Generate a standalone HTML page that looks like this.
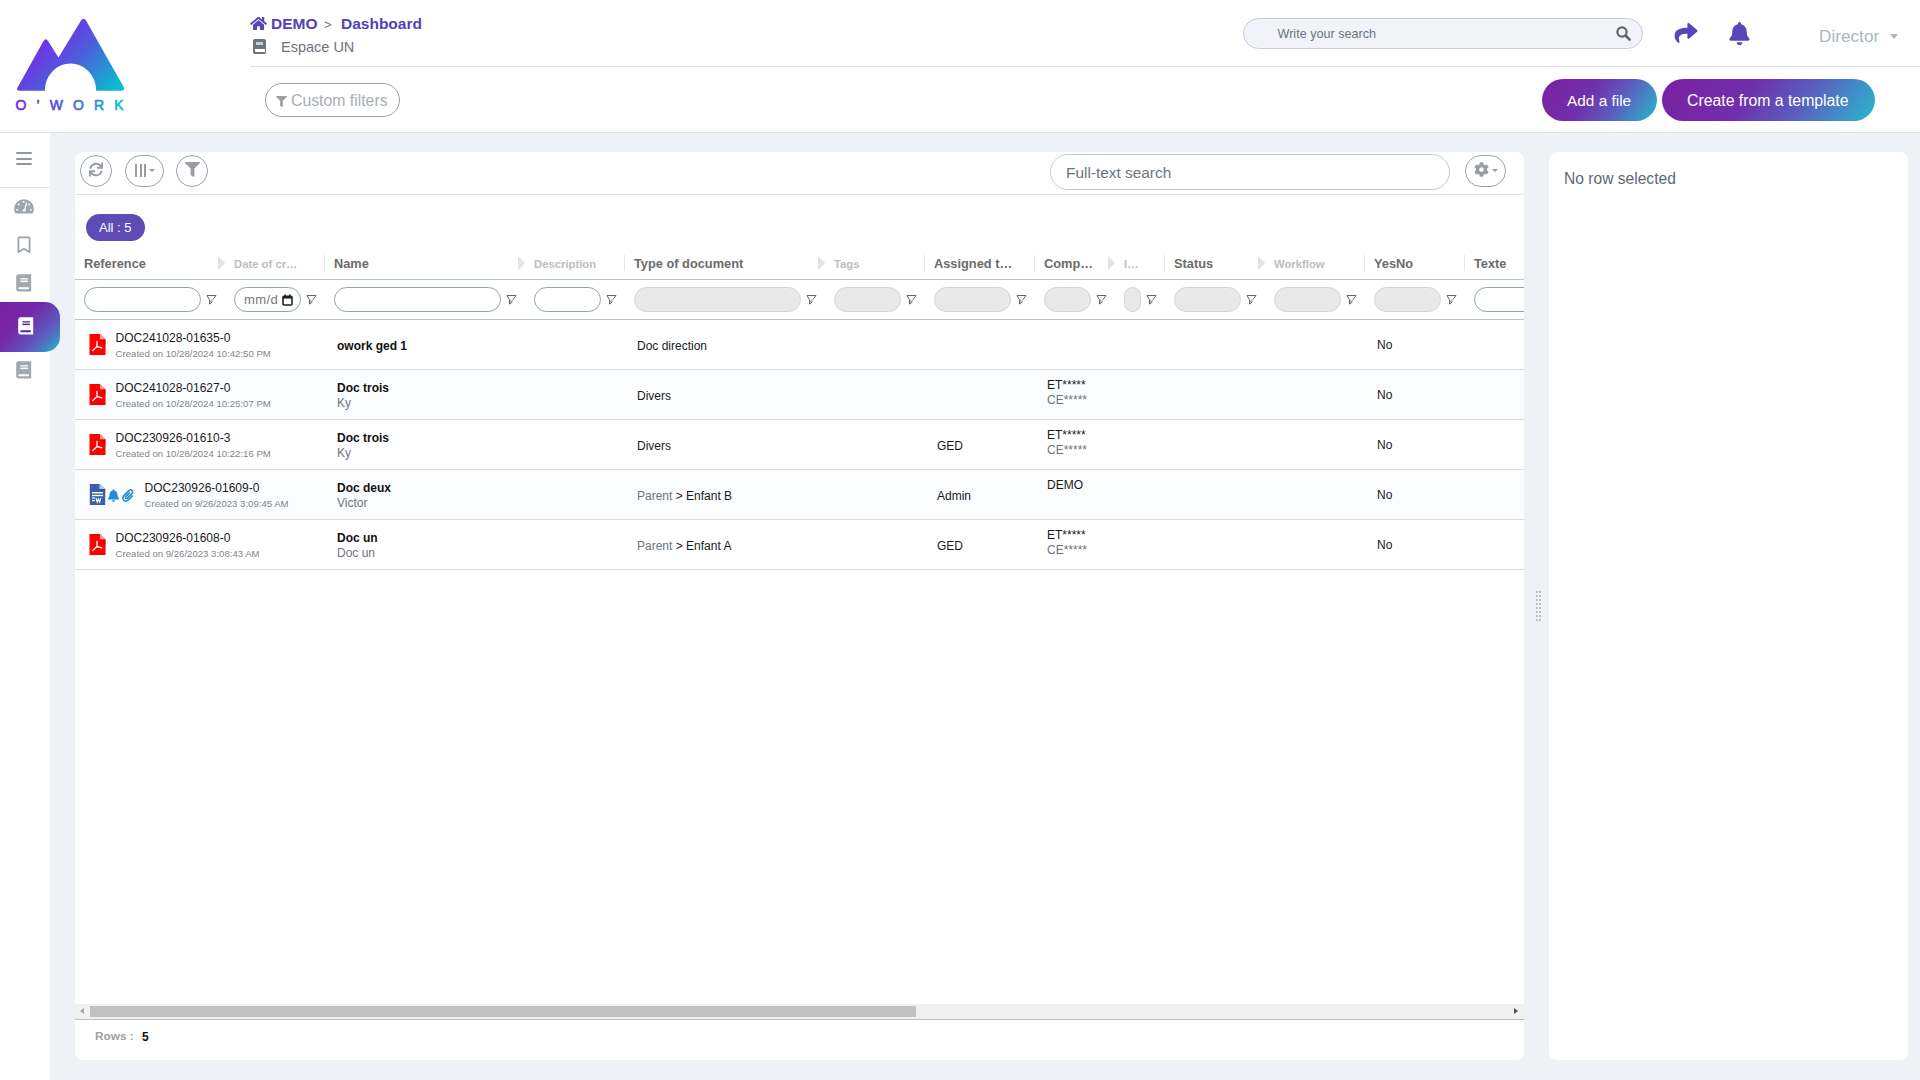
<!DOCTYPE html>
<html><head><meta charset="utf-8">
<style>
*{box-sizing:border-box;margin:0;padding:0}
html,body{width:1920px;height:1080px;overflow:hidden;background:#eef2f7;font-family:"Liberation Sans",sans-serif;}
.abs{position:absolute}
#header{position:absolute;left:0;top:0;width:1920px;height:133px;background:#fff;border-bottom:1px solid #dde2e8}
#sidebar{position:absolute;left:0;top:133px;width:50px;height:947px;background:#fff}
.panel{position:absolute;background:#fff;border-radius:8px}
.txt{position:absolute;white-space:nowrap;line-height:1}

.hd{position:absolute;top:258px;font-size:12.8px;font-weight:bold;color:#6b6b6b;white-space:nowrap;line-height:1}
.hl{position:absolute;top:259px;font-size:11.3px;font-weight:bold;color:#bdbdbd;white-space:nowrap;line-height:1}
.tri{position:absolute;top:256px;width:0;height:0;border-top:7px solid transparent;border-bottom:7px solid transparent;border-left:7px solid #e3e3e3}
.vsep{position:absolute;top:255px;width:1px;height:16px;background:#e6e6e6}
.fin{position:absolute;top:287px;height:25px;border:1px solid #8fa5a5;border-radius:13px;background:#fff}
.fin.dis{background:#e9e9e9;border-color:#cfd6d6}
.fun{position:absolute;top:294px}
.mmd{position:absolute;left:9px;top:5px;font-size:13px;color:#777;line-height:1;letter-spacing:0.4px}
.cal{position:absolute;left:47px;top:6px}
.row{position:absolute;left:75px;width:1449px;height:50px;border-bottom:1px solid #d9dde0}
.ref{position:absolute;font-size:12px;color:#1a1a1a;white-space:nowrap;line-height:1}
.cre{position:absolute;font-size:9.6px;color:#7f868d;white-space:nowrap;line-height:1}
.nm{position:absolute;font-size:12px;font-weight:bold;color:#111;white-space:nowrap;line-height:1}
.sub{position:absolute;font-size:12px;color:#6c757d;white-space:nowrap;line-height:1}
.cell{position:absolute;font-size:12px;color:#1a1a1a;white-space:nowrap;line-height:1}
.sideico{position:absolute}
</style></head>
<body>

<div id="header">
  <!-- logo -->
  <svg class="abs" style="left:0;top:0" width="140" height="120" viewBox="0 0 140 120">
    <defs>
      <linearGradient id="lg" x1="35" y1="35" x2="106" y2="106" gradientUnits="userSpaceOnUse">
        <stop offset="0" stop-color="#7a25ea"/>
        <stop offset="0.45" stop-color="#4f5bdc"/>
        <stop offset="1" stop-color="#00c8cc"/>
      </linearGradient>
      <linearGradient id="lgt" x1="0" y1="0" x2="1" y2="0">
        <stop offset="0" stop-color="#7a2ae0"/>
        <stop offset="0.45" stop-color="#4a5ad8"/>
        <stop offset="1" stop-color="#0ac4cc"/>
      </linearGradient>
    </defs>
    <path fill="url(#lg)" d="M17.3 88 L43.5 41 Q45.8 37.5 48 41 L58.5 57.5 L81 20.5 Q83.5 17 86 20.5 L123.7 87 Q125.2 90.7 121 90.7 L96.2 90.7 A25.7 27.2 0 0 0 44.8 90.7 L20 90.7 Q15.8 90.7 17.3 88 Z"/>
    <text x="15.5" y="109.8" fill="url(#lgt)" stroke="url(#lgt)" font-family="Liberation Sans" font-weight="normal" stroke-width="0.6" font-size="14" textLength="108" lengthAdjust="spacing">O’WORK</text>
  </svg>
  <!-- breadcrumb -->
  <svg class="abs" style="left:250px;top:17px" width="17" height="13" viewBox="0 0 576 448"><path fill="#5a44b9" d="M280.4 148.3L96 300.1V464a16 16 0 0 0 16 16l112.1-.3a16 16 0 0 0 15.9-16V368a16 16 0 0 1 16-16h64a16 16 0 0 1 16 16v95.6a16 16 0 0 0 16 16.1L464 480a16 16 0 0 0 16-16V300L295.7 148.3a12.2 12.2 0 0 0-15.3 0zM571.6 251.5L488 182.6V44.1a12 12 0 0 0-12-12h-56a12 12 0 0 0-12 12v72.6L318.5 43a48 48 0 0 0-61 0L4.3 251.5a12 12 0 0 0-1.6 16.9l25.5 31A12 12 0 0 0 45.2 301l235.2-193.7a12.2 12.2 0 0 1 15.3 0L530.9 301a12 12 0 0 0 16.9-1.6l25.5-31a12 12 0 0 0-1.7-16.9z" transform="translate(0,-32)"/></svg>
  <div class="txt" style="left:271px;top:16px;font-size:15.5px;font-weight:bold;color:#5440b8">DEMO</div>
  <div class="txt" style="left:324px;top:18px;font-size:13px;color:#6c757d">&gt;</div>
  <div class="txt" style="left:341px;top:16px;font-size:15.5px;font-weight:bold;color:#5440b8">Dashboard</div>
  <div class="abs" style="left:253px;top:39px;width:13px;height:15px;background:#6c757d;border-radius:2px"></div>
  <div class="abs" style="left:256px;top:42px;width:7px;height:3px;background:#c8ccd0"></div>
  <div class="abs" style="left:255px;top:49px;width:10px;height:3px;background:#fff;border-radius:0 0 0 1px"></div>
  <div class="txt" style="left:281px;top:40px;font-size:14.5px;color:#6c757d">Espace UN</div>
  <div class="abs" style="left:250px;top:66px;width:1670px;height:1px;background:#dde2e8"></div>
  <!-- custom filters -->
  <div class="abs" style="left:265px;top:83px;width:135px;height:34px;border:1px solid #9aa0a6;border-radius:17px"></div>
  <svg class="abs" style="left:276px;top:96px" width="11" height="11" viewBox="0 0 512 512"><path fill="#9aa0a6" d="M487.976 0H24.028C2.71 0-8.047 25.866 7.058 40.971L192 225.941V432c0 7.831 3.821 15.17 10.237 19.662l80 55.98C298.02 518.69 320 507.493 320 487.98V225.941l184.947-184.97C520.021 25.896 509.338 0 487.976 0z"/></svg>
  <div class="txt" style="left:291px;top:93px;font-size:15.8px;color:#a9aeb3">Custom filters</div>
  <!-- search -->
  <div class="abs" style="left:1243px;top:18px;width:400px;height:31px;border:1px solid #c9cdd3;border-radius:16px;background:#f1f2fa"></div>
  <div class="txt" style="left:1277.5px;top:28px;font-size:12.6px;color:#6c757d">Write your search</div>
  <svg class="abs" style="left:1616px;top:26px" width="15" height="15" viewBox="0 0 15 15"><circle cx="6" cy="6" r="4.6" fill="none" stroke="#5f666d" stroke-width="2.2"/><path d="M9.5 9.5 L13.5 13.5" stroke="#5f666d" stroke-width="2.6" stroke-linecap="round"/></svg>
  <!-- share -->
  <svg class="abs" style="left:1674px;top:23px" width="24" height="20" viewBox="0 0 512 448"><path fill="#5a44b9" d="M503.7 157.5l-176-152C312.3-7.8 288 3.1 288 24v80.1C127.4 105.9 0 138.1 0 290.4c0 61.5 39.6 122.4 83.4 154.2 13.7 9.9 33.1-2.5 28.1-18.6C66.1 280.8 132.3 242.1 288 239.9V328c0 20.9 24.3 31.9 39.7 18.5l176-152c11.1-9.6 11.1-26.8 0-37z" transform="translate(0,0)"/></svg>
  <!-- bell -->
  <svg class="abs" style="left:1729px;top:22px" width="21" height="23" viewBox="0 0 448 512"><path fill="#5a44b9" d="M224 512c35.32 0 63.97-28.65 63.97-64H160.03c0 35.35 28.65 64 63.97 64zm215.39-149.71c-19.32-20.76-55.47-51.99-55.47-154.29 0-77.7-54.48-139.9-127.94-155.16V32c0-17.67-14.32-32-31.98-32s-31.98 14.33-31.98 32v20.84C118.56 68.1 64.08 130.3 64.08 208c0 102.3-36.15 133.53-55.47 154.29-6 6.45-8.66 14.16-8.61 21.71.11 16.4 12.98 32 32.1 32h383.8c19.12 0 32-15.6 32.1-32 .05-7.55-2.61-15.27-8.61-21.71z"/></svg>
  <div class="txt" style="left:1819px;top:28px;font-size:17.2px;color:#adb5bd">Director</div>
  <div class="abs" style="left:1890px;top:34px;width:0;height:0;border-left:4px solid transparent;border-right:4px solid transparent;border-top:5px solid #adb5bd"></div>
  <!-- buttons -->
  <div class="abs" style="left:1542px;top:79px;width:115px;height:42px;border-radius:21px;background:linear-gradient(125deg,#7b1fa2 0%,#7030ab 40%,#5a5ec0 65%,#3a9ac8 88%,#22bccd 100%)"></div>
  <div class="txt" style="left:1567px;top:93px;font-size:15.4px;color:#fff">Add a file</div>
  <div class="abs" style="left:1662px;top:79px;width:213px;height:42px;border-radius:21px;background:linear-gradient(125deg,#7b1fa2 0%,#7030ab 40%,#5a5ec0 65%,#3a9ac8 88%,#22bccd 100%)"></div>
  <div class="txt" style="left:1687px;top:93px;font-size:15.8px;color:#fff">Create from a template</div>
</div>



<div id="sidebar">
</div>
<div class="abs" style="left:16px;top:152px;width:16px;height:2.2px;border-radius:1px;background:#8f969c"></div>
<div class="abs" style="left:16px;top:157.5px;width:16px;height:2.2px;border-radius:1px;background:#8f969c"></div>
<div class="abs" style="left:16px;top:163px;width:16px;height:2.2px;border-radius:1px;background:#8f969c"></div>
<div class="abs" style="left:0;top:187px;width:50px;height:1px;background:#e2e6ea"></div>
<svg class="abs" style="left:14px;top:199px" width="20" height="15" viewBox="0 0 20 15"><path d="M10 0.3 C4.5 0.3 0.2 4.7 0.2 10.1 C0.2 11.9 0.7 13.4 1.5 14.6 H18.5 C19.3 13.4 19.8 11.9 19.8 10.1 C19.8 4.7 15.5 0.3 10 0.3 Z" fill="#9ea5ab"/><rect x="8.7" y="2" width="1.6" height="1.6" fill="#fff"/><rect x="4" y="4.6" width="1.6" height="1.6" fill="#fff"/><rect x="14.4" y="4.6" width="1.6" height="1.6" fill="#fff"/><rect x="2.3" y="10" width="1.6" height="1.6" fill="#fff"/><rect x="16.1" y="10" width="1.6" height="1.6" fill="#fff"/><path d="M12.6 3.5 L10.8 10.5" stroke="#fff" stroke-width="1.3"/><path d="M8.3 12.2 Q8.3 10.2 10.2 10 Q11.8 10 11.9 12.2 Z" fill="#fff"/></svg>
<svg class="abs" style="left:16.5px;top:235.5px" width="14" height="18" viewBox="0 0 14 18"><path d="M1.4 16.2 V2.2 Q1.4 1.3 2.3 1.3 H11.7 Q12.6 1.3 12.6 2.2 V16.2 L7 12.6 Z" fill="none" stroke="#9aa1a7" stroke-width="1.7" stroke-linejoin="round"/></svg>

<svg class="abs" style="left:16px;top:273.5px" width="16" height="18" viewBox="0 0 16 18"><path d="M2.6 0.2 H15.2 V17.4 H2.8 Q0.2 17.4 0.2 14.8 V2.8 Q0.2 0.2 2.6 0.2 Z" fill="#a1a8b0"/><rect x="2.4" y="13.2" width="10.6" height="2.1" rx="0.8" fill="#fff"/><rect x="4.3" y="4.2" width="7.6" height="1.3" fill="#fff"/><rect x="4.3" y="6.6" width="7.6" height="1.5" fill="#fff"/></svg>
<div class="abs" style="left:0;top:302px;width:60px;height:50px;border-radius:0 15px 15px 0;background:linear-gradient(135deg,#7b1fa2 0%,#7428a8 38%,#5a5ec0 72%,#24bacd 100%)"></div>
<svg class="abs" style="left:18px;top:316.5px" width="16" height="18" viewBox="0 0 16 18"><path d="M2.6 0.2 H15.2 V17.4 H2.8 Q0.2 17.4 0.2 14.8 V2.8 Q0.2 0.2 2.6 0.2 Z" fill="#fff"/><rect x="2.4" y="13.2" width="10.6" height="2.1" rx="0.8" fill="#5a25a6"/><rect x="4.3" y="4.2" width="7.6" height="1.3" fill="#5a25a6"/><rect x="4.3" y="6.6" width="7.6" height="1.5" fill="#5a25a6"/></svg>
<svg class="abs" style="left:16px;top:361px" width="16" height="18" viewBox="0 0 16 18"><path d="M2.6 0.2 H15.2 V17.4 H2.8 Q0.2 17.4 0.2 14.8 V2.8 Q0.2 0.2 2.6 0.2 Z" fill="#a1a8b0"/><rect x="2.4" y="13.2" width="10.6" height="2.1" rx="0.8" fill="#fff"/><rect x="4.3" y="4.2" width="7.6" height="1.3" fill="#fff"/><rect x="4.3" y="6.6" width="7.6" height="1.5" fill="#fff"/></svg>
<div class="abs" style="left:75px;top:152px;width:1449px;height:908px;overflow:hidden;border-radius:8px;background:#fff">
</div>
<div class="abs" style="left:0;top:0;width:1524px;height:1080px;overflow:hidden">
<div class="hd" style="left:84px">Reference</div>
<div class="hl" style="left:234px">Date of cr…</div>
<div class="hd" style="left:334px">Name</div>
<div class="hl" style="left:534px">Description</div>
<div class="hd" style="left:634px">Type of document</div>
<div class="hl" style="left:834px">Tags</div>
<div class="hd" style="left:934px">Assigned t…</div>
<div class="hd" style="left:1044px">Comp…</div>
<div class="hl" style="left:1124px">I…</div>
<div class="hd" style="left:1174px">Status</div>
<div class="hl" style="left:1274px">Workflow</div>
<div class="hd" style="left:1374px">YesNo</div>
<div class="hd" style="left:1474px">Texte</div>
<div class="tri" style="left:218px"></div>
<div class="vsep" style="left:324px"></div>
<div class="tri" style="left:518px"></div>
<div class="vsep" style="left:624px"></div>
<div class="tri" style="left:818px"></div>
<div class="vsep" style="left:924px"></div>
<div class="vsep" style="left:1034px"></div>
<div class="tri" style="left:1108px"></div>
<div class="vsep" style="left:1164px"></div>
<div class="tri" style="left:1258px"></div>
<div class="vsep" style="left:1364px"></div>
<div class="vsep" style="left:1464px"></div>
<div class="fin" style="left:84px;width:117px"></div>
<svg class="fun" style="left:206px" width="11" height="12" viewBox="0 0 11 12"><path d="M3.3 5.7 H6.7 V7.6 L3.6 10.5 Z" fill="#c2c2c2"/><path d="M1 1.5 H10 L6.7 5.8 M1 1.5 L3.5 5.8 M3.5 5.8 V10.2 M6.5 7.7 L3.8 10" fill="none" stroke="#666" stroke-width="1" stroke-linejoin="round"/></svg>
<div class="fin" style="left:234px;width:67px"><span class="mmd">mm/d</span><svg class="cal" width="11" height="12" viewBox="0 0 11 12"><rect x="1" y="2.2" width="9" height="8.8" rx="1" fill="none" stroke="#222" stroke-width="1.6"/><rect x="1" y="2" width="9" height="2.6" fill="#222"/><rect x="2.4" y="0.5" width="1.6" height="2.5" fill="#222"/><rect x="7" y="0.5" width="1.6" height="2.5" fill="#222"/></svg></div>
<svg class="fun" style="left:306px" width="11" height="12" viewBox="0 0 11 12"><path d="M3.3 5.7 H6.7 V7.6 L3.6 10.5 Z" fill="#c2c2c2"/><path d="M1 1.5 H10 L6.7 5.8 M1 1.5 L3.5 5.8 M3.5 5.8 V10.2 M6.5 7.7 L3.8 10" fill="none" stroke="#666" stroke-width="1" stroke-linejoin="round"/></svg>
<div class="fin" style="left:334px;width:167px"></div>
<svg class="fun" style="left:506px" width="11" height="12" viewBox="0 0 11 12"><path d="M3.3 5.7 H6.7 V7.6 L3.6 10.5 Z" fill="#c2c2c2"/><path d="M1 1.5 H10 L6.7 5.8 M1 1.5 L3.5 5.8 M3.5 5.8 V10.2 M6.5 7.7 L3.8 10" fill="none" stroke="#666" stroke-width="1" stroke-linejoin="round"/></svg>
<div class="fin" style="left:534px;width:67px"></div>
<svg class="fun" style="left:606px" width="11" height="12" viewBox="0 0 11 12"><path d="M3.3 5.7 H6.7 V7.6 L3.6 10.5 Z" fill="#c2c2c2"/><path d="M1 1.5 H10 L6.7 5.8 M1 1.5 L3.5 5.8 M3.5 5.8 V10.2 M6.5 7.7 L3.8 10" fill="none" stroke="#666" stroke-width="1" stroke-linejoin="round"/></svg>
<div class="fin dis" style="left:634px;width:167px"></div>
<svg class="fun" style="left:806px" width="11" height="12" viewBox="0 0 11 12"><path d="M3.3 5.7 H6.7 V7.6 L3.6 10.5 Z" fill="#c2c2c2"/><path d="M1 1.5 H10 L6.7 5.8 M1 1.5 L3.5 5.8 M3.5 5.8 V10.2 M6.5 7.7 L3.8 10" fill="none" stroke="#666" stroke-width="1" stroke-linejoin="round"/></svg>
<div class="fin dis" style="left:834px;width:67px"></div>
<svg class="fun" style="left:906px" width="11" height="12" viewBox="0 0 11 12"><path d="M3.3 5.7 H6.7 V7.6 L3.6 10.5 Z" fill="#c2c2c2"/><path d="M1 1.5 H10 L6.7 5.8 M1 1.5 L3.5 5.8 M3.5 5.8 V10.2 M6.5 7.7 L3.8 10" fill="none" stroke="#666" stroke-width="1" stroke-linejoin="round"/></svg>
<div class="fin dis" style="left:934px;width:77px"></div>
<svg class="fun" style="left:1016px" width="11" height="12" viewBox="0 0 11 12"><path d="M3.3 5.7 H6.7 V7.6 L3.6 10.5 Z" fill="#c2c2c2"/><path d="M1 1.5 H10 L6.7 5.8 M1 1.5 L3.5 5.8 M3.5 5.8 V10.2 M6.5 7.7 L3.8 10" fill="none" stroke="#666" stroke-width="1" stroke-linejoin="round"/></svg>
<div class="fin dis" style="left:1044px;width:47px"></div>
<svg class="fun" style="left:1096px" width="11" height="12" viewBox="0 0 11 12"><path d="M3.3 5.7 H6.7 V7.6 L3.6 10.5 Z" fill="#c2c2c2"/><path d="M1 1.5 H10 L6.7 5.8 M1 1.5 L3.5 5.8 M3.5 5.8 V10.2 M6.5 7.7 L3.8 10" fill="none" stroke="#666" stroke-width="1" stroke-linejoin="round"/></svg>
<div class="fin dis" style="left:1124px;width:17px"></div>
<svg class="fun" style="left:1146px" width="11" height="12" viewBox="0 0 11 12"><path d="M3.3 5.7 H6.7 V7.6 L3.6 10.5 Z" fill="#c2c2c2"/><path d="M1 1.5 H10 L6.7 5.8 M1 1.5 L3.5 5.8 M3.5 5.8 V10.2 M6.5 7.7 L3.8 10" fill="none" stroke="#666" stroke-width="1" stroke-linejoin="round"/></svg>
<div class="fin dis" style="left:1174px;width:67px"></div>
<svg class="fun" style="left:1246px" width="11" height="12" viewBox="0 0 11 12"><path d="M3.3 5.7 H6.7 V7.6 L3.6 10.5 Z" fill="#c2c2c2"/><path d="M1 1.5 H10 L6.7 5.8 M1 1.5 L3.5 5.8 M3.5 5.8 V10.2 M6.5 7.7 L3.8 10" fill="none" stroke="#666" stroke-width="1" stroke-linejoin="round"/></svg>
<div class="fin dis" style="left:1274px;width:67px"></div>
<svg class="fun" style="left:1346px" width="11" height="12" viewBox="0 0 11 12"><path d="M3.3 5.7 H6.7 V7.6 L3.6 10.5 Z" fill="#c2c2c2"/><path d="M1 1.5 H10 L6.7 5.8 M1 1.5 L3.5 5.8 M3.5 5.8 V10.2 M6.5 7.7 L3.8 10" fill="none" stroke="#666" stroke-width="1" stroke-linejoin="round"/></svg>
<div class="fin dis" style="left:1374px;width:67px"></div>
<svg class="fun" style="left:1446px" width="11" height="12" viewBox="0 0 11 12"><path d="M3.3 5.7 H6.7 V7.6 L3.6 10.5 Z" fill="#c2c2c2"/><path d="M1 1.5 H10 L6.7 5.8 M1 1.5 L3.5 5.8 M3.5 5.8 V10.2 M6.5 7.7 L3.8 10" fill="none" stroke="#666" stroke-width="1" stroke-linejoin="round"/></svg>
<div class="fin" style="left:1474px;width:67px"></div>
<svg class="fun" style="left:1546px" width="11" height="12" viewBox="0 0 11 12"><path d="M3.3 5.7 H6.7 V7.6 L3.6 10.5 Z" fill="#c2c2c2"/><path d="M1 1.5 H10 L6.7 5.8 M1 1.5 L3.5 5.8 M3.5 5.8 V10.2 M6.5 7.7 L3.8 10" fill="none" stroke="#666" stroke-width="1" stroke-linejoin="round"/></svg>
</div>

<div class="abs" style="left:75px;top:194px;width:1449px;height:1px;background:#e6e6e6"></div>
<div class="abs" style="left:80px;top:155px;width:32px;height:32px;border:1px solid #9ea3a8;border-radius:50%"></div>
<svg class="abs" style="left:89px;top:162px" width="14" height="15" viewBox="0 0 512 512"><path fill="#979da3" d="M440.65 12.57l4 82.77A247.16 247.16 0 0 0 255.83 8C134.73 8 33.91 94.92 12.29 209.82A12 12 0 0 0 24.09 224h49.05a12 12 0 0 0 11.67-9.26 175.91 175.91 0 0 1 317-56.94l-101.46-4.86a12 12 0 0 0-12.57 12v47.41a12 12 0 0 0 12 12H500a12 12 0 0 0 12-12V12a12 12 0 0 0-12-12h-47.37a12 12 0 0 0-11.98 12.57zM255.83 432a175.61 175.61 0 0 1-146-77.8l101.8 4.87a12 12 0 0 0 12.57-12v-47.4a12 12 0 0 0-12-12H12a12 12 0 0 0-12 12V500a12 12 0 0 0 12 12h47.35a12 12 0 0 0 12-12.6l-4.15-82.57A247.17 247.17 0 0 0 255.83 504c121.11 0 221.93-86.92 243.55-201.82a12 12 0 0 0-11.8-14.18h-49.05a12 12 0 0 0-11.67 9.26A175.86 175.86 0 0 1 255.83 432z"/></svg>
<div class="abs" style="left:125px;top:155px;width:39px;height:32px;border:1px solid #9ea3a8;border-radius:16px"></div>
<div class="abs" style="left:135px;top:164px;width:2px;height:13px;background:#979da3"></div>
<div class="abs" style="left:139.5px;top:164px;width:2px;height:13px;background:#979da3"></div>
<div class="abs" style="left:144px;top:164px;width:2px;height:13px;background:#979da3"></div>
<div class="abs" style="left:149px;top:169px;width:0;height:0;border-left:3px solid transparent;border-right:3px solid transparent;border-top:3px solid #979da3"></div>
<div class="abs" style="left:176px;top:155px;width:32px;height:32px;border:1px solid #9ea3a8;border-radius:50%"></div>
<svg class="abs" style="left:185px;top:162px" width="15" height="15" viewBox="0 0 512 512"><path fill="#979da3" d="M487.976 0H24.028C2.71 0-8.047 25.866 7.058 40.971L192 225.941V432c0 7.831 3.821 15.17 10.237 19.662l80 55.98C298.02 518.69 320 507.493 320 487.98V225.941l184.947-184.97C520.021 25.896 509.338 0 487.976 0z"/></svg>
<div class="abs" style="left:1050px;top:154px;width:400px;height:36px;border:1px solid #c5ccd3;border-radius:18px;background:#fff"></div>
<div class="txt" style="left:1066px;top:165px;font-size:15.4px;color:#6c757d">Full-text search</div>
<div class="abs" style="left:1465px;top:155px;width:41px;height:32px;border:1px solid #9ea3a8;border-radius:16px"></div>
<svg class="abs" style="left:1473.5px;top:162px" width="15" height="15" viewBox="0 0 512 512"><path fill="#979da3" d="M487.4 315.7l-42.6-24.6c4.3-23.2 4.3-47 0-70.2l42.6-24.6c4.9-2.8 7.1-8.6 5.5-14-11.1-35.6-30-67.8-54.7-94.6-3.8-4.1-10-5.1-14.8-2.3L380.8 110c-17.9-15.4-38.5-27.3-60.8-35.1V25.8c0-5.6-3.9-10.5-9.4-11.7-36.7-8.2-74.3-7.8-109.2 0-5.5 1.2-9.4 6.1-9.4 11.7V75c-22.2 7.9-42.8 19.8-60.8 35.1L88.7 85.5c-4.9-2.8-11-1.9-14.8 2.3-24.7 26.7-43.6 58.9-54.7 94.6-1.7 5.4.6 11.2 5.5 14L67.3 221c-4.3 23.2-4.3 47 0 70.2l-42.6 24.6c-4.9 2.8-7.1 8.6-5.5 14 11.1 35.6 30 67.8 54.7 94.6 3.8 4.1 10 5.1 14.8 2.3l42.6-24.6c17.9 15.4 38.5 27.3 60.8 35.1v49.2c0 5.6 3.9 10.5 9.4 11.7 36.7 8.2 74.3 7.8 109.2 0 5.5-1.2 9.4-6.1 9.4-11.7v-49.2c22.2-7.9 42.8-19.8 60.8-35.1l42.6 24.6c4.9 2.8 11 1.9 14.8-2.3 24.7-26.7 43.6-58.9 54.7-94.6 1.5-5.5-.7-11.3-5.6-14.1zM256 336c-44.1 0-80-35.9-80-80s35.9-80 80-80 80 35.9 80 80-35.9 80-80 80z"/></svg>
<div class="abs" style="left:1492px;top:169px;width:0;height:0;border-left:3px solid transparent;border-right:3px solid transparent;border-top:3px solid #979da3"></div>
<div class="abs" style="left:86px;top:214px;width:59px;height:27px;border-radius:14px;background:#5f4bb6"></div>
<div class="txt" style="left:99px;top:221px;font-size:13px;color:#fff">All : 5</div>

<div class="abs" style="left:0;top:0;width:1524px;height:1080px;overflow:hidden">
<div class="abs" style="left:75px;top:279px;width:1449px;height:1px;background:#b9c4ca"></div>
<div class="abs" style="left:75px;top:319px;width:1449px;height:1px;background:#b9c4ca"></div>
<div class="row" style="top:320px;background:#fff"></div>
<svg class="abs" style="left:89px;top:334px" width="17" height="21" viewBox="0 0 17 21"><path d="M0.5 0 H11 L16.5 5.5 V21 H0.5 Z" fill="#ff0000"/><path d="M11 0 V5.5 H16.5 Z" fill="#ff9d9d"/><path d="M11 5.5 H16.5 V11 Z" fill="#d60000" opacity="0.8"/><path d="M8 7.5 V12.5 M8 12.5 L3.8 16.5 M8 12.5 L12.8 13.8" stroke="#fff" stroke-width="1.3" fill="none" stroke-linecap="round"/></svg>
<div class="ref" style="left:115.6px;top:332px">DOC241028-01635-0</div>
<div class="cre" style="left:115.6px;top:349px">Created on 10/28/2024 10:42:50 PM</div>
<div class="nm" style="left:337px;top:340px">owork ged 1</div>
<div class="cell" style="left:637px;top:340px">Doc direction</div>
<div class="cell" style="left:1377px;top:339px">No</div>
<div class="row" style="top:370px;background:#fbfcfe"></div>
<svg class="abs" style="left:89px;top:384px" width="17" height="21" viewBox="0 0 17 21"><path d="M0.5 0 H11 L16.5 5.5 V21 H0.5 Z" fill="#ff0000"/><path d="M11 0 V5.5 H16.5 Z" fill="#ff9d9d"/><path d="M11 5.5 H16.5 V11 Z" fill="#d60000" opacity="0.8"/><path d="M8 7.5 V12.5 M8 12.5 L3.8 16.5 M8 12.5 L12.8 13.8" stroke="#fff" stroke-width="1.3" fill="none" stroke-linecap="round"/></svg>
<div class="ref" style="left:115.6px;top:382px">DOC241028-01627-0</div>
<div class="cre" style="left:115.6px;top:399px">Created on 10/28/2024 10:25:07 PM</div>
<div class="nm" style="left:337px;top:382px">Doc trois</div>
<div class="sub" style="left:337px;top:397px">Ky</div>
<div class="cell" style="left:637px;top:390px">Divers</div>
<div class="cell" style="left:1047px;top:379px">ET*****</div>
<div class="sub" style="left:1047px;top:394px">CE*****</div>
<div class="cell" style="left:1377px;top:389px">No</div>
<div class="row" style="top:420px;background:#fff"></div>
<svg class="abs" style="left:89px;top:434px" width="17" height="21" viewBox="0 0 17 21"><path d="M0.5 0 H11 L16.5 5.5 V21 H0.5 Z" fill="#ff0000"/><path d="M11 0 V5.5 H16.5 Z" fill="#ff9d9d"/><path d="M11 5.5 H16.5 V11 Z" fill="#d60000" opacity="0.8"/><path d="M8 7.5 V12.5 M8 12.5 L3.8 16.5 M8 12.5 L12.8 13.8" stroke="#fff" stroke-width="1.3" fill="none" stroke-linecap="round"/></svg>
<div class="ref" style="left:115.6px;top:432px">DOC230926-01610-3</div>
<div class="cre" style="left:115.6px;top:449px">Created on 10/28/2024 10:22:16 PM</div>
<div class="nm" style="left:337px;top:432px">Doc trois</div>
<div class="sub" style="left:337px;top:447px">Ky</div>
<div class="cell" style="left:637px;top:440px">Divers</div>
<div class="cell" style="left:937px;top:440px">GED</div>
<div class="cell" style="left:1047px;top:429px">ET*****</div>
<div class="sub" style="left:1047px;top:444px">CE*****</div>
<div class="cell" style="left:1377px;top:439px">No</div>
<div class="row" style="top:470px;background:#fbfcfe"></div>
<svg class="abs" style="left:89px;top:484px" width="17" height="21" viewBox="0 0 17 21"><path d="M0.8 0 H10.5 L16.2 5 V21 H0.8 Z" fill="#3b5fae"/><path d="M10.5 0 V5 H16.2 Z" fill="#b9c6e3"/><path d="M10.5 5 H16.2 V9 Z" fill="#2d4e97" opacity="0.7"/><rect x="3" y="8" width="11" height="1.4" fill="#fff"/><rect x="3" y="10.8" width="11" height="1.4" fill="#fff"/><rect x="3" y="13.5" width="3" height="1.2" fill="#fff"/><rect x="3" y="16" width="3" height="1.2" fill="#fff"/><path d="M7 14 L8.2 18 L9.4 15 L10.6 18 L11.8 14" stroke="#fff" stroke-width="1.1" fill="none"/></svg>
<svg class="abs" style="left:108px;top:489px" width="11" height="13" viewBox="0 0 448 512"><path fill="#1f8fd6" d="M224 512c35.32 0 63.97-28.65 63.97-64H160.03c0 35.35 28.65 64 63.97 64zm215.39-149.71c-19.32-20.76-55.47-51.99-55.47-154.29 0-77.7-54.48-139.9-127.94-155.16V32c0-17.67-14.32-32-31.98-32s-31.98 14.33-31.98 32v20.84C118.56 68.1 64.08 130.3 64.08 208c0 102.3-36.15 133.53-55.47 154.29-6 6.45-8.66 14.16-8.61 21.71.11 16.4 12.98 32 32.1 32h383.8c19.12 0 32-15.6 32.1-32 .05-7.55-2.61-15.27-8.61-21.71z"/></svg>
<svg class="abs" style="left:122px;top:489px" width="11.5" height="13" viewBox="0 0 448 512"><path fill="#1f8fd6" d="M43.246 466.142c-58.43-60.289-57.341-157.511 1.386-217.581L254.392 34c44.316-45.332 116.351-45.336 160.671 0 43.89 44.894 43.943 117.329 0 162.276L232.214 383.341c-29.855 30.537-78.633 30.111-107.982-.998-28.275-29.97-27.368-77.473 1.452-106.953l143.743-146.835c6.182-6.314 16.312-6.422 22.626-.241l22.861 22.379c6.315 6.182 6.422 16.312.241 22.626L171.427 319.927c-4.932 5.045-5.236 13.428-.648 18.292 4.372 4.634 11.245 4.711 15.688.165l182.849-187.065c19.613-20.062 19.613-52.725-.011-72.798-19.189-19.627-49.957-19.637-69.154 0L90.39 293.295c-34.763 35.56-35.299 93.12-1.191 128.313 34.01 35.093 88.985 35.137 123.058.286l172.06-175.999c6.177-6.319 16.307-6.433 22.626-.256l22.877 22.364c6.319 6.177 6.434 16.307.256 22.626l-172.06 175.998c-59.576 60.938-155.943 60.216-214.77-.485z" transform="rotate(0)"/></svg>
<div class="ref" style="left:144.6px;top:482px">DOC230926-01609-0</div>
<div class="cre" style="left:144.6px;top:499px">Created on 9/26/2023 3:09:45 AM</div>
<div class="nm" style="left:337px;top:482px">Doc deux</div>
<div class="sub" style="left:337px;top:497px">Victor</div>
<div class="cell" style="left:637px;top:490px"><span style="color:#6c757d">Parent</span> &gt; Enfant B</div>
<div class="cell" style="left:937px;top:490px">Admin</div>
<div class="cell" style="left:1047px;top:479px">DEMO</div>
<div class="cell" style="left:1377px;top:489px">No</div>
<div class="row" style="top:520px;background:#fff"></div>
<svg class="abs" style="left:89px;top:534px" width="17" height="21" viewBox="0 0 17 21"><path d="M0.5 0 H11 L16.5 5.5 V21 H0.5 Z" fill="#ff0000"/><path d="M11 0 V5.5 H16.5 Z" fill="#ff9d9d"/><path d="M11 5.5 H16.5 V11 Z" fill="#d60000" opacity="0.8"/><path d="M8 7.5 V12.5 M8 12.5 L3.8 16.5 M8 12.5 L12.8 13.8" stroke="#fff" stroke-width="1.3" fill="none" stroke-linecap="round"/></svg>
<div class="ref" style="left:115.6px;top:532px">DOC230926-01608-0</div>
<div class="cre" style="left:115.6px;top:549px">Created on 9/26/2023 3:08:43 AM</div>
<div class="nm" style="left:337px;top:532px">Doc un</div>
<div class="sub" style="left:337px;top:547px">Doc un</div>
<div class="cell" style="left:637px;top:540px"><span style="color:#6c757d">Parent</span> &gt; Enfant A</div>
<div class="cell" style="left:937px;top:540px">GED</div>
<div class="cell" style="left:1047px;top:529px">ET*****</div>
<div class="sub" style="left:1047px;top:544px">CE*****</div>
<div class="cell" style="left:1377px;top:539px">No</div>
</div>

<div class="abs" style="left:75px;top:1004px;width:1449px;height:15px;background:#f1f1f1"></div>
<div class="abs" style="left:90px;top:1006px;width:826px;height:11px;background:#c1c1c1"></div>
<div class="abs" style="left:80px;top:1008px;width:0;height:0;border-top:3.5px solid transparent;border-bottom:3.5px solid transparent;border-right:4.5px solid #a3a3a3"></div>
<div class="abs" style="left:1514px;top:1008px;width:0;height:0;border-top:3.5px solid transparent;border-bottom:3.5px solid transparent;border-left:4.5px solid #505050"></div>
<div class="abs" style="left:75px;top:1019px;width:1449px;height:1px;background:#b8c0c5"></div>
<div class="txt" style="left:95px;top:1031px;font-size:11.8px;font-weight:bold;color:#a0a0a0">Rows :</div>
<div class="txt" style="left:142px;top:1031px;font-size:12px;font-weight:bold;color:#111">5</div>


<div class="abs" style="left:1549px;top:152px;width:359px;height:908px;border-radius:8px;background:#fff"></div>
<div class="txt" style="left:1564px;top:171px;font-size:15.6px;color:#5f6870">No row selected</div>
<svg class="abs" style="left:1536px;top:591px" width="6" height="30" viewBox="0 0 6 30"><rect x="0" y="0" width="2" height="2" fill="#c0c0c0"/><rect x="3" y="0" width="2" height="2" fill="#c0c0c0"/><rect x="0" y="4" width="2" height="2" fill="#c0c0c0"/><rect x="3" y="4" width="2" height="2" fill="#c0c0c0"/><rect x="0" y="8" width="2" height="2" fill="#c0c0c0"/><rect x="3" y="8" width="2" height="2" fill="#c0c0c0"/><rect x="0" y="12" width="2" height="2" fill="#c0c0c0"/><rect x="3" y="12" width="2" height="2" fill="#c0c0c0"/><rect x="0" y="16" width="2" height="2" fill="#c0c0c0"/><rect x="3" y="16" width="2" height="2" fill="#c0c0c0"/><rect x="0" y="20" width="2" height="2" fill="#c0c0c0"/><rect x="3" y="20" width="2" height="2" fill="#c0c0c0"/><rect x="0" y="24" width="2" height="2" fill="#c0c0c0"/><rect x="3" y="24" width="2" height="2" fill="#c0c0c0"/><rect x="0" y="28" width="2" height="2" fill="#c0c0c0"/><rect x="3" y="28" width="2" height="2" fill="#c0c0c0"/></svg>

</body></html>
